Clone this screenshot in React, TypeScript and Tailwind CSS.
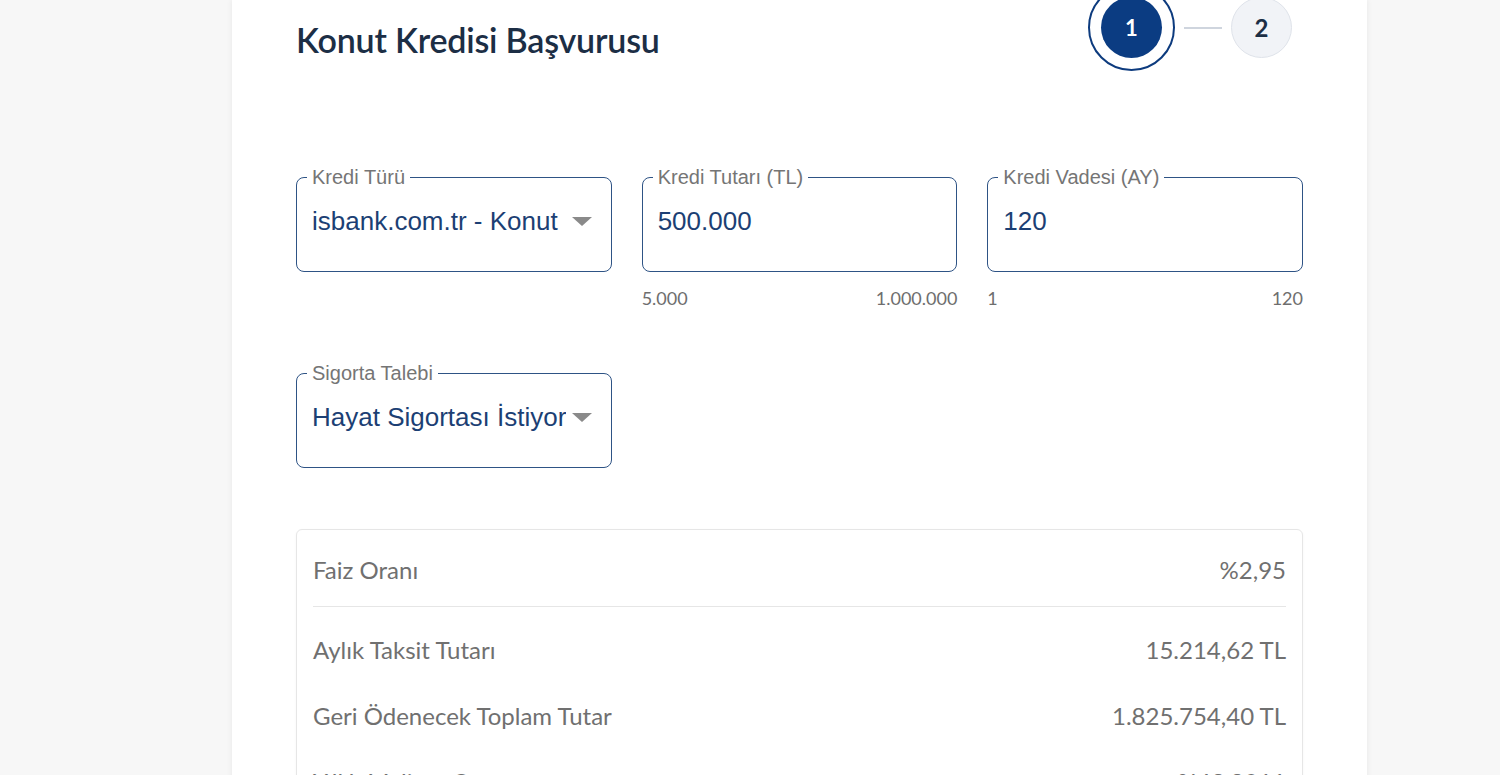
import React from 'react'

const valueFont = { fontFamily: '"Liberation Sans", Arial, sans-serif' }

function Caret() {
  return (
    <svg width="20" height="9" viewBox="0 0 20 9" className="shrink-0">
      <path d="M0 0 L20 0 L10 9 Z" fill="#8a8a8a" />
    </svg>
  )
}

interface FieldProps {
  label: string
  value: string
  select?: boolean
  min?: string
  max?: string
}

function Field({ label, value, select = false, min, max }: FieldProps) {
  return (
    <div className="flex flex-col">
      <div className="relative h-[95px] rounded-[8px] border-[1.5px] border-[#2e5385]">
        <span className="absolute -top-[12px] left-[10px] bg-white px-[5px] text-[20px] leading-[22px] text-[#757575] font-['Liberation_Sans',Arial,sans-serif]">
          {label}
        </span>
        <div className="flex h-full items-center pl-[15px] pr-[19px] pb-[8px]">
          <div
            className="min-w-0 flex-1 overflow-hidden whitespace-nowrap text-[26px] leading-[34px] text-[#1c3f74]"
            style={valueFont}
          >
            {value}
          </div>
          {select && (
            <div className="ml-[6px] pt-[2px]">
              <Caret />
            </div>
          )}
        </div>
      </div>
      {min && (
        <div className="mt-[16px] flex justify-between text-[18px] leading-[20px] text-[#6e6e6e] font-['Lato',sans-serif]">
          <span>{min}</span>
          <span>{max}</span>
        </div>
      )}
    </div>
  )
}

function ResultRow({ label, value }: { label: string; value: string }) {
  return (
    <div className="flex h-[38px] items-center justify-between text-[24px] text-[#707070] font-['Lato',sans-serif]">
      <span>{label}</span>
      <span>{value}</span>
    </div>
  )
}

export default function App() {
  return (
    <div className="min-h-screen overflow-hidden bg-[#f7f7f7]">
      <div className="ml-[232px] min-h-screen w-[1135px] bg-white px-16 shadow-[0_0_6px_rgba(0,0,0,0.07)]">
        {/* Header */}
        <div className="flex items-start justify-between pr-[11px]">
          <h1 className="mt-[20px] text-[34px] leading-[40px] font-semibold tracking-[-0.2px] text-[#1c2e45] font-['Lato',sans-serif]">
            Konut Kredisi Başvurusu
          </h1>
          <div className="-mt-[16px] flex items-center">
            <div className="rounded-full border-2 border-[#0d3b7e] p-[11px]">
              <div className="flex h-[61px] w-[61px] items-center justify-center rounded-full bg-[#0b3c82] text-[22px] font-bold text-white font-['Lato',sans-serif]">
                1
              </div>
            </div>
            <div className="mx-[9px] h-[2px] w-[38px] bg-[#cfd5de]" />
            <div className="flex h-[61px] w-[61px] items-center justify-center rounded-full border border-[#dfe3ea] bg-[#f1f3f7] text-[24px] font-bold text-[#1c2e45] font-['Lato',sans-serif]">
              2
            </div>
          </div>
        </div>

        {/* Form */}
        <div className="mt-[106px] grid grid-cols-3 items-start gap-x-[30px]">
          <Field label="Kredi Türü" value="isbank.com.tr - Konut Kredisi" select />
          <Field label="Kredi Tutarı (TL)" value="500.000" min="5.000" max="1.000.000" />
          <Field label="Kredi Vadesi (AY)" value="120" min="1" max="120" />
        </div>

        <div className="mt-[65px] grid grid-cols-3 gap-x-[30px]">
          <Field label="Sigorta Talebi" value="Hayat Sigortası İstiyorum" select />
        </div>

        {/* Results */}
        <div className="mt-[61px] rounded-[6px] border border-[#e6e6e6] px-[16px] pt-[21px] pb-[20px] shadow-[0_1px_3px_rgba(0,0,0,0.04)]">
          <ResultRow label="Faiz Oranı" value="%2,95" />
          <div className="mt-[17px] h-px bg-[#e6e6e6]" />
          <div className="mt-[24px] flex flex-col gap-[28px]">
            <ResultRow label="Aylık Taksit Tutarı" value="15.214,62 TL" />
            <ResultRow label="Geri Ödenecek Toplam Tutar" value="1.825.754,40 TL" />
            <ResultRow label="Yıllık Maliyet Oranı" value="%43,8911" />
          </div>
        </div>
      </div>
    </div>
  )
}
